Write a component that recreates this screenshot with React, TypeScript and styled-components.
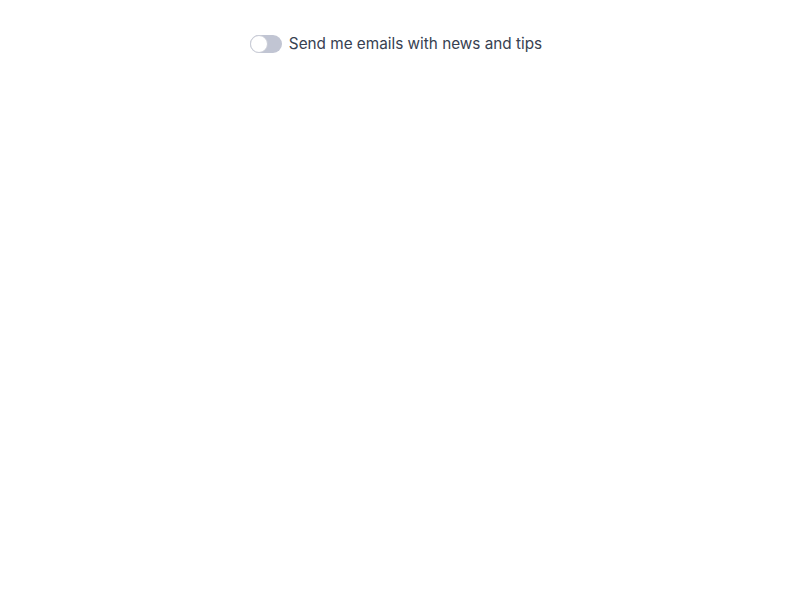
import React, { useState } from "react";
import styled, { createGlobalStyle } from "styled-components";

const Global = createGlobalStyle`
  html, body { margin: 0; padding: 0; background: #ffffff; }
  body { font-family: Inter, "Noto Sans", sans-serif; }
`;

const Page = styled.div`
  display: flex;
  justify-content: center;
  padding: 34px 8px 0 0;
`;

const Row = styled.label`
  display: flex;
  align-items: center;
  gap: 7px;
  cursor: pointer;
`;

const Track = styled.span<{ $on: boolean }>`
  position: relative;
  display: inline-block;
  width: 32px;
  height: 18px;
  border-radius: 9px;
  background: ${(p) => (p.$on ? "#4f46e5" : "#c1c5d3")};
  flex-shrink: 0;
`;

const Knob = styled.span<{ $on: boolean }>`
  position: absolute;
  top: 0;
  left: ${(p) => (p.$on ? "14px" : "0")};
  width: 18px;
  height: 18px;
  box-sizing: border-box;
  border-radius: 50%;
  background: #ffffff;
  border: 1px solid #c9ccd6;
`;

const Label = styled.span`
  font-size: 15.3px;
  line-height: 20px;
  color: #374151;
`;

export default function App() {
  const [on, setOn] = useState(false);
  return (
    <>
      <Global />
      <Page>
        <Row onClick={() => setOn(!on)}>
          <Track $on={on}>
            <Knob $on={on} />
          </Track>
          <Label>Send me emails with news and tips</Label>
        </Row>
      </Page>
    </>
  );
}
